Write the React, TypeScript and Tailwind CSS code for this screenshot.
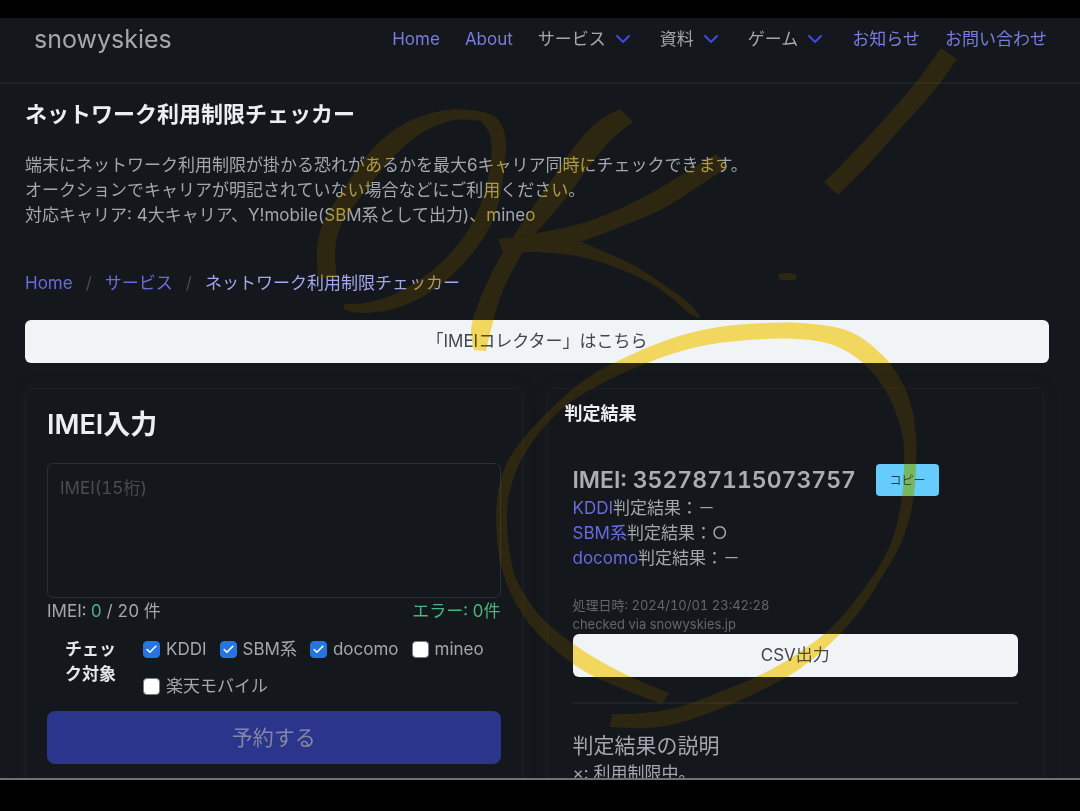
import React, { useState } from "react";
import { Check, ChevronDown } from "lucide-react";

const navItems = [
    { label: "Home", menu: false },
    { label: "About", menu: false },
    { label: "サービス", menu: true },
    { label: "資料", menu: true },
    { label: "ゲーム", menu: true },
    { label: "お知らせ", menu: false },
    { label: "お問い合わせ", menu: false },
];

const carriers = [
    { id: "kddi", label: "KDDI", on: true },
    { id: "sbm", label: "SBM系", on: true },
    { id: "docomo", label: "docomo", on: true },
    { id: "mineo", label: "mineo", on: false },
    { id: "rakuten", label: "楽天モバイル", on: false },
];

const results = [
    { carrier: "KDDI", mark: "－" },
    { carrier: "SBM系", mark: "○" },
    { carrier: "docomo", mark: "－" },
];

// outlines of the marker strokes
const markerStrokes: number[][][] = [
    // O
    [[318, 278], [317, 250], [323, 223], [343, 190], [370, 152], [402, 125], [440, 111], [470, 110], [495, 117], [505, 135], [504, 170], [495, 215], [475, 250], [440, 285], [400, 307], [362, 313], [343, 309], [345, 304], [365, 303], [397, 293], [435, 268], [465, 235], [482, 200], [491, 160], [490, 135], [481, 121], [455, 120], [420, 134], [385, 166], [360, 198], [341, 225], [335, 250], [337, 278]],
    // K stem
    [[620, 109], [600, 120], [577, 143], [553, 178], [533, 207], [513, 237], [500, 257], [487, 283], [477, 307], [471, 330], [474, 350], [486, 351], [493, 322], [503, 290], [520, 257], [533, 237], [550, 217], [570, 193], [590, 165], [610, 141], [633, 122]],
    // K arm
    [[716, 154], [683, 174], [653, 192], [617, 210], [583, 223], [533, 234], [498, 239], [503, 252], [545, 251], [580, 242], [620, 227], [660, 210], [693, 190], [728, 167]],
    // K leg
    [[503, 240], [503, 252], [553, 253], [590, 259], [627, 272], [660, 289], [692, 315], [701, 318], [690, 304], [667, 287], [633, 265], [600, 250], [575, 240], [540, 235]],
    // exclamation mark
    [[941, 48], [929, 65], [913, 86], [880, 124], [848, 158], [824, 182], [838, 195], [868, 165], [900, 129], [934, 91], [957, 59]],
    [[778, 274], [790, 273], [797, 275], [796, 280], [780, 280]],
    // circle
    [[669, 693], [662, 704], [633, 693], [595, 677], [572, 663], [541, 637], [518, 607], [503, 573], [497, 540], [497, 500], [505, 467], [522, 440], [557, 403], [590, 376], [620, 360], [667, 340], [713, 328], [763, 323], [813, 324], [853, 333], [887, 360], [907, 393], [915, 427], [916, 467], [912, 507], [901, 543], [882, 577], [859, 612], [832, 642], [798, 670], [756, 693], [717, 710], [679, 723], [648, 728], [610, 727], [612, 714], [645, 713], [679, 707], [717, 693], [756, 677], [794, 656], [832, 627], [863, 590], [888, 550], [900, 510], [904, 467], [902, 433], [887, 393], [863, 363], [833, 345], [797, 339], [747, 340], [697, 347], [647, 363], [595, 387], [557, 413], [525, 453], [510, 490], [507, 520], [510, 555], [518, 583], [541, 617], [572, 643], [602, 662], [633, 678]],
];

// direction of the curve at a point, none where the outline turns sharply
function tangent(prev: number[], point: number[], next: number[]) {
    const inX = point[0] - prev[0], inY = point[1] - prev[1];
    const outX = next[0] - point[0], outY = next[1] - point[1];
    const cos = (inX * outX + inY * outY) / (Math.hypot(inX, inY) * Math.hypot(outX, outY));
    if (cos < 0.6) return [0, 0];
    const len = Math.hypot(inX + outX, inY + outY);
    return [(inX + outX) / len, (inY + outY) / len];
}

function smoothPath(points: number[][]) {
    const n = points.length;
    const tangents = points.map((p, i) => tangent(points[(i + n - 1) % n], p, points[(i + 1) % n]));
    let d = `M${points[0][0]} ${points[0][1]}`;
    for (let i = 0; i < n; i++) {
        const a = points[i], b = points[(i + 1) % n];
        const ta = tangents[i], tb = tangents[(i + 1) % n];
        const reach = Math.hypot(b[0] - a[0], b[1] - a[1]) / 3;
        d += `C${a[0] + ta[0] * reach} ${a[1] + ta[1] * reach} ${b[0] - tb[0] * reach} ${b[1] - tb[1] * reach} ${b[0]} ${b[1]}`;
    }
    return d + "Z";
}

function Marker({ className }: { className: string }) {
    return <svg aria-hidden="true" viewBox="0 0 1080 811" className={`pointer-events-none absolute inset-x-0 top-0 w-full ${className}`}>
        {markerStrokes.map((points, i) => <path key={i} d={smoothPath(points)} />)}
    </svg>;
}

function NavBar() {
    return <header className="flex h-[66px] items-start justify-between border-b-2 border-[#1d2025] pr-[33px] pl-[34px]">
        <a href="#" className="text-[25px] leading-[42px] text-[#a3a7ae]">snowyskies</a>
        <nav className="flex gap-[25px] leading-[42px]">
            {navItems.map((item) => item.menu
                ? <button key={item.label} type="button" className="flex items-center gap-[5px] text-[#a3a7ae]">
                    {item.label}
                    <ChevronDown size={24} strokeWidth={2} className="text-[#4248e0]" />
                </button>
                : <a key={item.label} href="#" className="text-[#7a7de0]">{item.label}</a>)}
        </nav>
    </header>;
}

function CarrierCheck({ id, label, on }: { id: string; label: string; on: boolean }) {
    const [checked, setChecked] = useState(on);
    return <div className="flex items-center gap-[6px]">
        <span className="relative size-[17px]">
            <input id={id} type="checkbox" checked={checked} onChange={() => setChecked(!checked)}
                className="block size-[17px] appearance-none rounded-[4px] border border-[#777a80] bg-white checked:border-[#2674e0] checked:bg-[#2674e0]" />
            {checked && <Check size={13} strokeWidth={3} className="pointer-events-none absolute top-[2px] left-[2px] text-white" />}
        </span>
        <label htmlFor={id}>{label}</label>
    </div>;
}

function InputCard() {
    const [imei, setImei] = useState("");
    return <section className="rounded-lg border border-[#1b1e22] px-[21px] pt-[18px] shadow-[0_0_12px_#1a1d21]">
        <h2 className="text-[27px] leading-[36px] font-semibold text-[#eceef1]">
            <label htmlFor="imei">IMEI入力</label>
        </h2>
        <textarea id="imei" value={imei} onChange={(e) => setImei(e.target.value)} placeholder="IMEI(15桁)"
            className="mt-5 block h-[135px] w-full resize-none rounded-md border border-[#2b2e38] bg-transparent px-3 py-3 leading-[25px] tabular-nums placeholder:text-[#4a4d52]" />
        <div className="mt-px flex justify-between tabular-nums">
            <span>IMEI: <span className="text-[#48b57c]">0</span> / 20 件</span>
            <span className="text-[#48b57c]">エラー: 0件</span>
        </div>
        <fieldset className="mt-[13px] flex gap-[25px] pl-[18px]">
            <div className="w-[53px] shrink-0 font-bold text-[#e4e6ea]">チェック対象</div>
            <div className="flex flex-wrap gap-x-[13px] gap-y-3">
                {carriers.map((c) => <CarrierCheck key={c.id} {...c} />)}
            </div>
        </fieldset>
        <button type="button" className="mt-3 h-[53px] w-full rounded-lg bg-[#2b358c] text-[21px] text-[#8488a4]">予約する</button>
    </section>;
}

function ResultCard() {
    return <section className="rounded-lg border border-[#1b1e22] px-[25px] pt-3 pb-8 shadow-[0_0_12px_#1a1d21]">
        <h2 className="-ml-2 text-[18px] font-bold text-[#eceef1]">判定結果</h2>
        <div className="mt-[38px] flex items-center gap-5">
            <h3 className="text-[23px] leading-[32px] font-semibold tabular-nums text-[#a9adb4]">IMEI: 352787115073757</h3>
            <button type="button" className="h-8 w-[63px] rounded bg-[#66ccfb] text-[12px] text-[#24424f]">コピー</button>
        </div>
        {results.map((r) => <p key={r.carrier}>
            <a href="#" className="text-[#686be0]">{r.carrier}</a>判定結果：{r.mark}
        </p>)}
        <p className="mt-[25px] text-[13px] leading-[19px] tabular-nums text-[#63666f]">
            処理日時: 2024/10/01 23:42:28<br />checked via snowyskies.jp
        </p>
        <button type="button" className="h-[43px] w-full rounded-md bg-[#f0f4f7] text-[#42464b]">CSV出力</button>
        <hr className="mt-[25px] border-t-2 border-[#1f2227]" />
        <h3 className="mt-[26px] text-[21px] leading-[31px]">判定結果の説明</h3>
        <p>×: 利用制限中。</p>
    </section>;
}

export default function App() {
    return <div lang="ja" className="relative isolate flex h-screen flex-col bg-black pt-[18px] pb-[31px] font-['Inter','Noto_Sans_CJK_JP',sans-serif] text-[17px] leading-[25px] text-[#a3a7ae]">
        <div className="min-h-0 flex-1 overflow-hidden border-b-2 border-[#6f7174] bg-[#14171b]">
            <NavBar />
            <main className="pr-[31px] pl-[25px]">
                <h1 className="mt-[14px] text-[22px] leading-[32px] font-bold text-[#eceef1]">ネットワーク利用制限チェッカー</h1>
                <p className="mt-[23px]">
                    端末にネットワーク利用制限が掛かる恐れがあるかを最大6キャリア同時にチェックできます。<br />
                    オークションでキャリアが明記されていない場合などにご利用ください。<br />
                    対応キャリア: 4大キャリア、Y!mobile(SBM系として出力)、mineo
                </p>
                <nav className="mt-[43px] flex gap-[13px]">
                    <a href="#" className="text-[#686be0]">Home</a>
                    <span className="text-[#46494f]">/</span>
                    <a href="#" className="text-[#686be0]">サービス</a>
                    <span className="text-[#46494f]">/</span>
                    <a href="#" className="text-[#a5a8ee]">ネットワーク利用制限チェッカー</a>
                </nav>
                <button type="button" className="mt-6 h-[43px] w-full rounded-md bg-[#f0f4f7] text-[#42464b]">「IMEIコレクター」はこちら</button>
                <div className="mt-[25px] grid grid-cols-2 gap-6 pr-[5px]">
                    <InputCard />
                    <ResultCard />
                </div>
            </main>
        </div>
        {/* marker ink: tints what is bright, then lifts what is dark */}
        <Marker className="fill-[#ffde5e] mix-blend-multiply" />
        <Marker className="fill-[#1b1406] mix-blend-screen" />
    </div>;
}
